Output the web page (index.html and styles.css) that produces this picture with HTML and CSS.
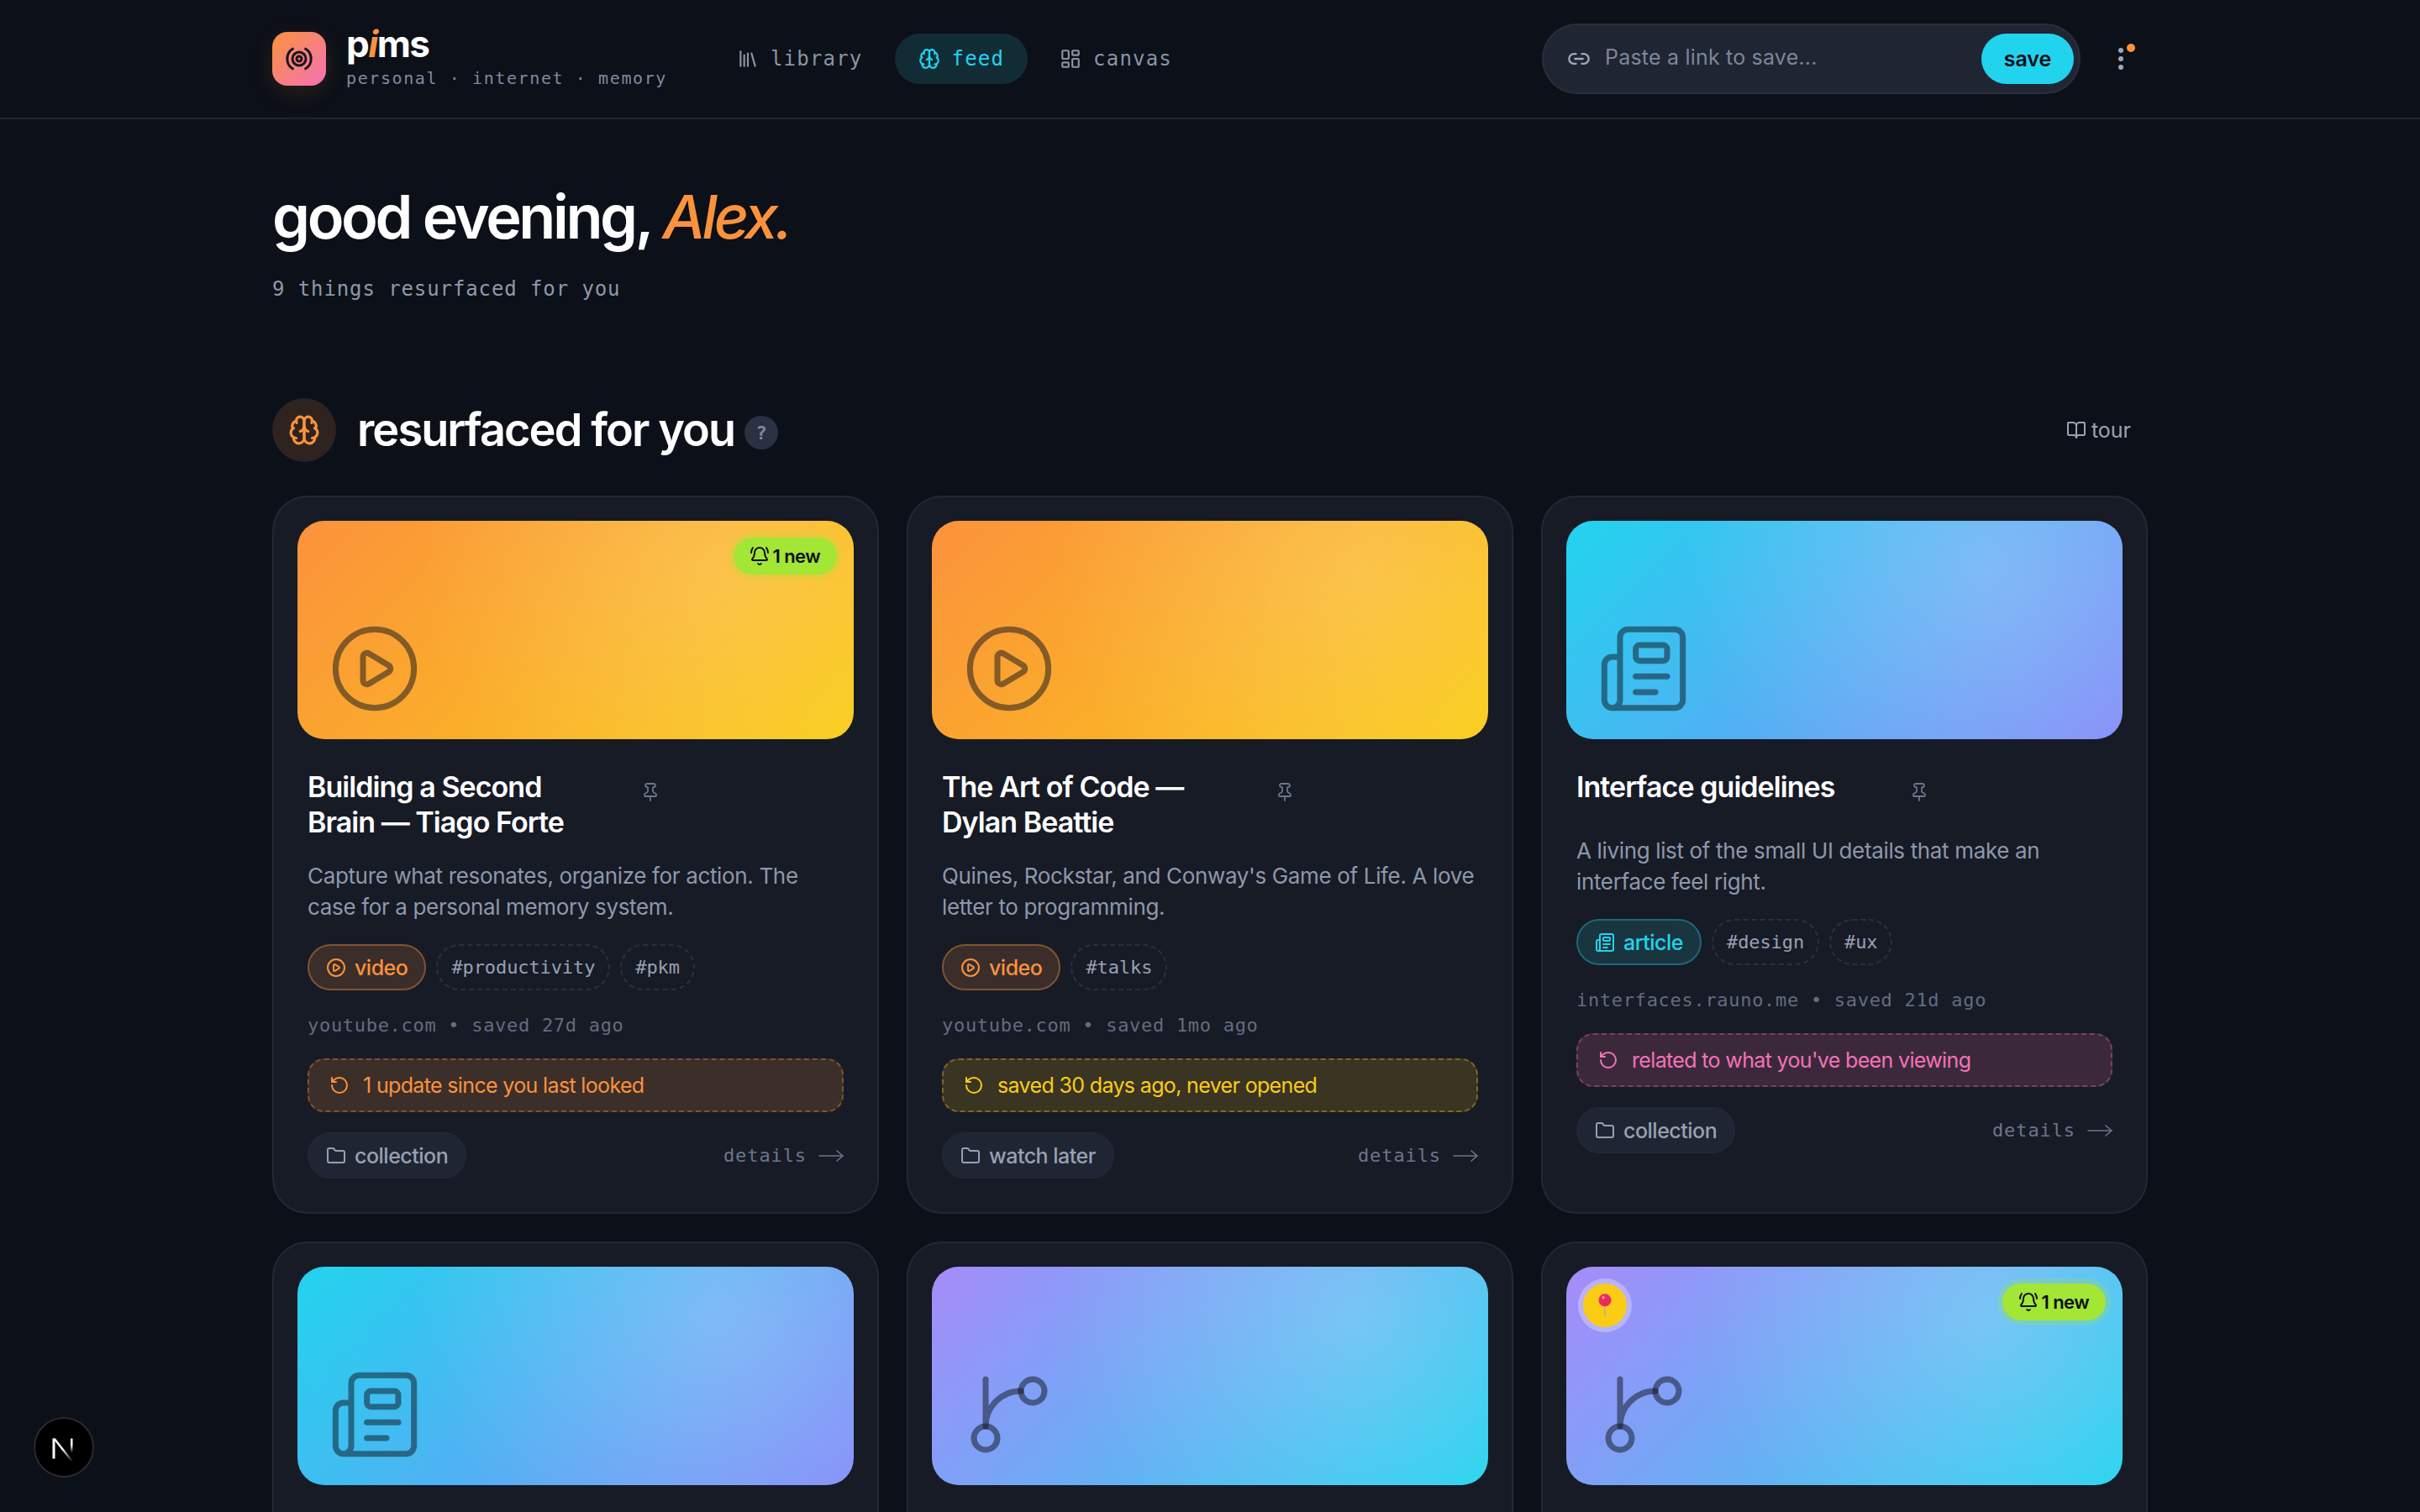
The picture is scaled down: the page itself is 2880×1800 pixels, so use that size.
FILE: index.html
```html
<!DOCTYPE html>
<html lang="en">
<head>
<meta charset="utf-8">
<title>pims</title>
<link rel="stylesheet" href="styles.css">
</head>
<body>
<svg class="defs" aria-hidden="true">
  <symbol id="i-library" viewBox="0 0 24 24"><path d="m16 6 4 14"/><path d="M12 6v14"/><path d="M8 8v12"/><path d="M4 4v16"/></symbol>
  <symbol id="i-brain" viewBox="0 0 24 24"><path d="M12 5a3 3 0 1 0-5.997.125 4 4 0 0 0-2.526 5.77 4 4 0 0 0 .556 6.588A4 4 0 1 0 12 18Z"/><path d="M12 5a3 3 0 1 1 5.997.125 4 4 0 0 1 2.526 5.77 4 4 0 0 1-.556 6.588A4 4 0 1 1 12 18Z"/><path d="M15 13a4.5 4.5 0 0 1-3-4 4.5 4.5 0 0 1-3 4"/><path d="M17.599 6.5a3 3 0 0 0 .399-1.375"/><path d="M6.003 5.125A3 3 0 0 0 6.401 6.5"/><path d="M3.477 10.896a4 4 0 0 1 .585-.396"/><path d="M19.938 10.5a4 4 0 0 1 .585.396"/><path d="M6 18a4 4 0 0 1-1.967-.516"/><path d="M19.967 17.484A4 4 0 0 1 18 18"/></symbol>
  <symbol id="i-canvas" viewBox="0 0 24 24"><rect width="7" height="9" x="3" y="3" rx="1"/><rect width="7" height="5" x="14" y="3" rx="1"/><rect width="7" height="9" x="14" y="12" rx="1"/><rect width="7" height="5" x="3" y="16" rx="1"/></symbol>
  <symbol id="i-link" viewBox="0 0 24 24"><path d="M9 17H7A5 5 0 0 1 7 7h2"/><path d="M15 7h2a5 5 0 1 1 0 10h-2"/><line x1="8" x2="16" y1="12" y2="12"/></symbol>
  <symbol id="i-book" viewBox="0 0 24 24"><path d="M12 7v14"/><path d="M3 18a1 1 0 0 1-1-1V4a1 1 0 0 1 1-1h5a4 4 0 0 1 4 4 4 4 0 0 1 4-4h5a1 1 0 0 1 1 1v13a1 1 0 0 1-1 1h-6a3 3 0 0 0-3 3 3 3 0 0 0-3-3z"/></symbol>
  <symbol id="i-play" viewBox="0 0 24 24"><path d="M9 9.003a1 1 0 0 1 1.517-.859l4.997 2.997a1 1 0 0 1 0 1.718l-4.997 2.997A1 1 0 0 1 9 14.996z"/><circle cx="12" cy="12" r="10"/></symbol>
  <symbol id="i-news" viewBox="0 0 24 24"><path d="M15 18h-5"/><path d="M18 14h-8"/><path d="M4 22h16a2 2 0 0 0 2-2V4a2 2 0 0 0-2-2H8a2 2 0 0 0-2 2v16a2 2 0 0 1-4 0v-9a2 2 0 0 1 2-2h2"/><rect width="8" height="4" x="10" y="6" rx="1"/></symbol>
  <symbol id="i-branch" viewBox="0 0 24 24"><path d="M15 6a9 9 0 0 0-9 9V3"/><circle cx="18" cy="6" r="3"/><circle cx="6" cy="18" r="3"/></symbol>
  <symbol id="i-bell" viewBox="0 0 24 24"><path d="M10.268 21a2 2 0 0 0 3.464 0"/><path d="M22 8c0-2.3-.8-4.3-2-6"/><path d="M3.262 15.326A1 1 0 0 0 4 17h16a1 1 0 0 0 .74-1.673C19.41 13.956 18 12.499 18 8A6 6 0 0 0 6 8c0 4.499-1.411 5.956-2.738 7.326"/><path d="M4 2C2.8 3.7 2 5.7 2 8"/></symbol>
  <symbol id="i-pin" viewBox="0 0 24 24"><path d="M12 17v5"/><path d="M9 10.76a2 2 0 0 1-1.11 1.79l-1.78.9A2 2 0 0 0 5 15.24V16a1 1 0 0 0 1 1h12a1 1 0 0 0 1-1v-.76a2 2 0 0 0-1.11-1.79l-1.78-.9A2 2 0 0 1 15 10.76V7a1 1 0 0 1 1-1 2 2 0 0 0 0-4H8a2 2 0 0 0 0 4 1 1 0 0 1 1 1z"/></symbol>
  <symbol id="i-rotate" viewBox="0 0 24 24"><path d="M3 12a9 9 0 1 0 9-9 9.75 9.75 0 0 0-6.74 2.74L3 8"/><path d="M3 3v5h5"/></symbol>
  <symbol id="i-folder" viewBox="0 0 24 24"><path d="M20 20a2 2 0 0 0 2-2V8a2 2 0 0 0-2-2h-7.9a2 2 0 0 1-1.69-.9L9.6 3.9A2 2 0 0 0 7.93 3H4a2 2 0 0 0-2 2v13a2 2 0 0 0 2 2Z"/></symbol>
  <symbol id="i-arrow" viewBox="0 0 30 24"><path d="M1 12h28"/><path d="m22 6 7 6-7 6"/></symbol>
</svg>

<header class="topbar">
  <div class="wrap topbar-row">
    <a class="brand">
      <span class="logo">
        <svg viewBox="0 0 32 32" class="logo-mark"><path d="M9.500 3.500a14 14 0 0 0 0 25"/><path d="M22.500 3.500a14 14 0 0 1 0 25"/><circle cx="16" cy="16" r="8"/><circle cx="16" cy="16" r="3"/></svg>
      </span>
      <span class="brand-text">
        <span class="brand-name">p<i>i</i>ms</span>
        <span class="brand-sub">personal · internet · memory</span>
      </span>
    </a>
    <nav class="nav">
      <a class="nav-link"><svg class="ic ic-nav"><use href="#i-library"/></svg>library</a>
      <a class="nav-link is-active"><svg class="ic ic-nav"><use href="#i-brain"/></svg>feed</a>
      <a class="nav-link"><svg class="ic ic-nav"><use href="#i-canvas"/></svg>canvas</a>
    </nav>
    <div class="actions">
      <form class="savebar">
        <svg class="ic ic-link"><use href="#i-link"/></svg>
        <span class="placeholder">Paste a link to save...</span>
        <span class="save-btn">save</span>
      </form>
      <button class="kebab" type="button"><span></span><span></span><span></span><b></b></button>
    </div>
  </div>
</header>

<main class="wrap">
  <section class="hero">
    <h1>good evening, <em>Alex.</em></h1>
    <p>9 things resurfaced for you</p>
  </section>

  <section class="sec-head">
    <span class="sec-icon"><svg class="ic ic-sec"><use href="#i-brain"/></svg></span>
    <h2>resurfaced for you</h2>
    <span class="help">?</span>
    <a class="tour"><svg class="ic ic-tour"><use href="#i-book"/></svg>tour</a>
  </section>

  <section class="grid">
    <article class="card">
      <div class="thumb t-video">
        <span class="badge-new"><svg class="ic ic-bell"><use href="#i-bell"/></svg>1 new</span>
        <svg class="ic thumb-ic"><use href="#i-play"/></svg>
      </div>
      <div class="body">
        <div class="title-row"><h3>Building a Second Brain — Tiago Forte</h3><span class="pin"><svg class="ic ic-pin"><use href="#i-pin"/></svg></span></div>
        <p class="desc">Capture what resonates, organize for action. The case for a personal memory system.</p>
        <div class="tags">
          <span class="kind k-video"><svg class="ic ic-tag"><use href="#i-play"/></svg>video</span>
          <span class="tag">#productivity</span>
          <span class="tag">#pkm</span>
        </div>
        <p class="meta">youtube.com • saved 27d ago</p>
        <div class="nudge n-orange"><svg class="ic ic-nudge"><use href="#i-rotate"/></svg>1 update since you last looked</div>
        <div class="foot">
          <span class="coll"><svg class="ic ic-tag"><use href="#i-folder"/></svg>collection</span>
          <a class="details">details<svg class="ic ic-arrow"><use href="#i-arrow"/></svg></a>
        </div>
      </div>
    </article>

    <article class="card">
      <div class="thumb t-video">
        <svg class="ic thumb-ic"><use href="#i-play"/></svg>
      </div>
      <div class="body">
        <div class="title-row"><h3>The Art of Code — Dylan Beattie</h3><span class="pin"><svg class="ic ic-pin"><use href="#i-pin"/></svg></span></div>
        <p class="desc">Quines, Rockstar, and Conway's Game of Life. A love letter to programming.</p>
        <div class="tags">
          <span class="kind k-video"><svg class="ic ic-tag"><use href="#i-play"/></svg>video</span>
          <span class="tag">#talks</span>
        </div>
        <p class="meta">youtube.com • saved 1mo ago</p>
        <div class="nudge n-yellow"><svg class="ic ic-nudge"><use href="#i-rotate"/></svg>saved 30 days ago, never opened</div>
        <div class="foot">
          <span class="coll"><svg class="ic ic-tag"><use href="#i-folder"/></svg>watch later</span>
          <a class="details">details<svg class="ic ic-arrow"><use href="#i-arrow"/></svg></a>
        </div>
      </div>
    </article>

    <article class="card">
      <div class="thumb t-article">
        <svg class="ic thumb-ic"><use href="#i-news"/></svg>
      </div>
      <div class="body">
        <div class="title-row"><h3>Interface guidelines</h3><span class="pin"><svg class="ic ic-pin"><use href="#i-pin"/></svg></span></div>
        <p class="desc">A living list of the small UI details that make an interface feel right.</p>
        <div class="tags">
          <span class="kind k-article"><svg class="ic ic-tag"><use href="#i-news"/></svg>article</span>
          <span class="tag">#design</span>
          <span class="tag">#ux</span>
        </div>
        <p class="meta">interfaces.rauno.me • saved 21d ago</p>
        <div class="nudge n-pink"><svg class="ic ic-nudge"><use href="#i-rotate"/></svg>related to what you've been viewing</div>
        <div class="foot">
          <span class="coll"><svg class="ic ic-tag"><use href="#i-folder"/></svg>collection</span>
          <a class="details">details<svg class="ic ic-arrow"><use href="#i-arrow"/></svg></a>
        </div>
      </div>
    </article>

    <article class="card card-cut">
      <div class="thumb t-article">
        <svg class="ic thumb-ic"><use href="#i-news"/></svg>
      </div>
    </article>

    <article class="card card-cut">
      <div class="thumb t-repo">
        <svg class="ic thumb-ic"><use href="#i-branch"/></svg>
      </div>
    </article>

    <article class="card card-cut">
      <div class="thumb t-repo">
        <span class="badge-pin">
          <svg viewBox="0 0 24 24" class="pushpin">
            <rect x="11.500" y="11" width="1" height="11.500" rx=".5" class="pp-needle"/>
            <circle cx="12" cy="7" r="6" class="pp-head"/>
            <ellipse cx="10.500" cy="4.500" rx="1.300" ry="1.600" class="pp-shine"/>
          </svg>
        </span>
        <span class="badge-new"><svg class="ic ic-bell"><use href="#i-bell"/></svg>1 new</span>
        <svg class="ic thumb-ic"><use href="#i-branch"/></svg>
      </div>
    </article>
  </section>
</main>

<button class="next-badge" type="button">
  <svg viewBox="0 0 40 40" class="next-mark">
    <defs><linearGradient id="nfade" x1="0" y1="0" x2="0" y2="1"><stop offset=".45" stop-color="#fff"/><stop offset="1" stop-color="#fff" stop-opacity="0"/></linearGradient></defs>
    <rect x="6.500" y="9.500" width="3" height="24" class="nm-solid"/>
    <path d="M7 9.500h3L31.500 37h-3z" fill="url(#nfade)"/>
    <rect x="28" y="9.500" width="2.500" height="17" fill="url(#nfade)"/>
  </svg>
</button>
</body>
</html>
```

FILE: styles.css
```css
* { box-sizing: border-box; }
html { background: #0c1018; scrollbar-width: none; }
body {
  margin: 0;
  background: #0c1018;
  color: #fff;
  font-family: Inter, "Liberation Sans", sans-serif;
}
h1, h2, h3, p { margin: 0; }
.defs { position: absolute; width: 0; height: 0; overflow: hidden; }
.wrap { width: 2232px; margin: 0 auto; }
.ic {
  display: block;
  flex: none;
  fill: none;
  stroke: currentColor;
  stroke-width: 2;
  stroke-linecap: round;
  stroke-linejoin: round;
}

/* top bar */
.topbar { height: 142px; border-bottom: 2px solid #1e2430; }
.topbar-row { height: 140px; display: flex; align-items: center; }
.brand { display: flex; align-items: center; gap: 24px; }
.logo {
  width: 64px; height: 64px;
  border-radius: 18px;
  display: flex; align-items: center; justify-content: center;
  background: linear-gradient(135deg, #fb923c, #f472b6);
  box-shadow: 0 8px 28px rgba(251, 146, 60, .12);
}
.logo-mark { width: 32px; height: 32px; fill: none; stroke: #1a1220; stroke-width: 3; }
.brand-text { display: flex; flex-direction: column; }
.brand-name { font-size: 44px; line-height: 46px; font-weight: 700; letter-spacing: -1.5px; margin-top: -6px; }
.brand-name i { color: #fb923c; font-weight: 700; }
.brand-sub {
  font-family: "DejaVu Sans Mono", monospace;
  font-size: 20px; line-height: 24px;
  letter-spacing: 1.6px;
  color: #8089a0;
  margin-top: 6px;
}
.nav { display: flex; gap: 10px; margin-left: 55px; }
.nav-link {
  height: 60px;
  padding: 0 28px;
  border-radius: 30px;
  display: flex; align-items: center; gap: 14px;
  font-family: "DejaVu Sans Mono", monospace;
  font-size: 24px;
  letter-spacing: 1.2px;
  color: #8a93a6;
}
.nav-link.is-active { background: #122c36; color: #22d3ee; }
.ic-nav { width: 26px; height: 26px; }
.actions { margin-left: auto; margin-right: 12px; display: flex; align-items: center; gap: 28px; }
.savebar {
  width: 641px; height: 84px;
  margin: 0;
  padding: 0 6px 0 28px;
  border-radius: 42px;
  border: 2px solid #282e3c;
  background: #1f2532;
  display: flex; align-items: center;
}
.ic-link { width: 28px; height: 28px; color: #a0a8b8; }
.placeholder { margin-left: 17px; font-size: 25px; letter-spacing: .2px; color: #7d8698; position: relative; top: -2px; }
.save-btn {
  margin-left: auto;
  width: 110px; height: 60px;
  border-radius: 30px;
  background: #22d3ee;
  color: #0c1018;
  font-size: 25px; font-weight: 600;
  display: flex; align-items: center; justify-content: center;
}
.kebab {
  position: relative;
  width: 40px; height: 40px;
  padding: 0;
  border: 0; background: none;
  display: flex; flex-direction: column; align-items: center; justify-content: center; gap: 4px;
}
.kebab span { width: 6px; height: 6px; border-radius: 50%; background: #a0a8b8; }
.kebab b {
  position: absolute; top: 2px; right: 3px;
  width: 10px; height: 10px; border-radius: 50%;
  background: #fb923c;
}

/* hero */
.hero { padding-top: 74px; }
.hero h1 {
  font-size: 72px; line-height: 84px;
  font-weight: 600;
  letter-spacing: -3.4px;
}
.hero em { color: #fb923c; font-weight: 500; letter-spacing: -4px; }
.hero p {
  margin-top: 28px;
  font-family: "DejaVu Sans Mono", monospace;
  font-size: 24px; line-height: 32px;
  letter-spacing: .9px;
  color: #8f98aa;
}

/* section head */
.sec-head { margin-top: 114px; display: flex; align-items: center; height: 76px; }
.sec-icon {
  width: 76px; height: 76px; border-radius: 50%;
  background: #2f231f; color: #fb923c;
  display: flex; align-items: center; justify-content: center;
}
.ic-sec { width: 38px; height: 38px; }
.sec-head h2 {
  margin-left: 25px;
  font-size: 54px; line-height: 64px;
  font-weight: 600;
  letter-spacing: -1.9px;
}
.help {
  margin-left: 12px;
  width: 40px; height: 40px; border-radius: 50%;
  background: #2a3142; color: #8089a0;
  font-family: "DejaVu Sans Mono", monospace;
  font-size: 22px; font-weight: 700;
  display: flex; align-items: center; justify-content: center;
  position: relative; top: 3px;
}
.tour {
  margin-left: auto; margin-right: 20px;
  display: flex; align-items: center; gap: 6px;
  font-size: 25px; color: #9aa3b2;
}
.ic-tour { width: 24px; height: 24px; }

/* grid */
.grid {
  margin-top: 40px;
  display: grid;
  grid-template-columns: repeat(3, 1fr);
  gap: 33px 33px;
}
.card {
  min-width: 0;
  padding: 28px 28px 40px;
  border-radius: 42px;
  border: 2px solid #222836;
  background: #171b26;
}
.card-cut { height: 420px; }
.thumb {
  position: relative;
  height: 260px;
  border-radius: 32px;
}
.t-video {
  background:
    radial-gradient(circle 360px at 76% 22%, rgba(255, 255, 255, .18), rgba(255, 255, 255, 0) 100%),
    linear-gradient(135deg, #fb923c, #facc15);
}
.t-article {
  background:
    radial-gradient(circle 360px at 76% 22%, rgba(255, 255, 255, .22), rgba(255, 255, 255, 0) 100%),
    linear-gradient(135deg, #22d3ee, #818cf8);
}
.t-repo {
  background:
    radial-gradient(circle 360px at 76% 22%, rgba(255, 255, 255, .2), rgba(255, 255, 255, 0) 100%),
    linear-gradient(135deg, #a78bfa, #22d3ee);
}
.thumb-ic {
  position: absolute; left: 36px; bottom: 28px;
  width: 112px; height: 112px;
  color: rgba(13, 17, 28, .5);
  stroke-width: 1.5;
}
.badge-new {
  position: absolute; top: 20px; right: 20px;
  height: 44px; padding: 0 20px 0 19px;
  border-radius: 22px;
  background: #a3e635;
  box-shadow: 0 0 0 6px rgba(163, 230, 53, .22);
  color: #0c1018;
  font-size: 22px; font-weight: 600; letter-spacing: -.6px;
  display: flex; align-items: center; gap: 4px;
}
.ic-bell { width: 24px; height: 24px; }
.badge-pin {
  position: absolute; top: 20px; left: 20px;
  width: 52px; height: 52px; border-radius: 50%;
  background: #facc15;
  box-shadow: 0 0 0 6px rgba(255, 255, 255, .3);
  display: flex; align-items: center; justify-content: center;
}
.pushpin { width: 30px; height: 30px; }
.pp-needle { fill: #a9a9a9; }
.pp-head { fill: #ec2a62; }
.pp-shine { fill: #ff8fa8; }

.body { padding: 36px 12px 0; }
.title-row { display: flex; align-items: flex-start; min-height: 54px; }
.title-row h3 {
  width: 340px;
  font-size: 34px; line-height: 42px;
  font-weight: 600;
  letter-spacing: -.95px;
}
.pin { margin-left: 56px; padding-top: 15px; width: 24px; color: #6d768a; }
.ic-pin { width: 24px; height: 24px; stroke-width: 1.8; }
.desc {
  margin-top: 24px;
  font-size: 26px; line-height: 37px;
  letter-spacing: -.35px;
  color: #8e98ab;
}
.tags { margin-top: 26px; display: flex; gap: 12px; }
.kind {
  height: 55px; padding: 0 20px;
  border-radius: 28px;
  display: flex; align-items: center; gap: 10px;
  font-size: 25px; font-weight: 500; letter-spacing: -.5px;
  border: 2px solid;
}
.k-video { background: #3a2d2a; border-color: #7f5430; color: #fb923c; }
.k-article { background: #19353f; border-color: #1c6878; color: #22d3ee; }
.ic-tag { width: 24px; height: 24px; }
.tag {
  height: 55px; padding: 0 16px;
  border-radius: 28px;
  border: 2px dashed #2a3040;
  display: flex; align-items: center;
  font-family: "DejaVu Sans Mono", monospace;
  font-size: 22px; font-weight: 500;
  letter-spacing: -.1px;
  color: #98a1b3;
}
.meta {
  margin-top: 27px;
  font-family: "DejaVu Sans Mono", monospace;
  font-size: 22px; line-height: 30px;
  letter-spacing: .7px;
  color: #636c80;
}
.nudge {
  margin-top: 24px;
  height: 64px; padding: 0 24px;
  border-radius: 20px;
  border: 2px dashed;
  display: flex; align-items: center; gap: 16px;
  font-size: 25px; letter-spacing: -.65px;
}
.n-orange { background: #3c2e29; border-color: #7f5430; color: #fb923c; }
.n-yellow { background: #3a3423; border-color: #7e6a1c; color: #facc15; }
.n-pink { background: #3b293b; border-color: #7c3f67; color: #f472b6; }
.ic-nudge { width: 24px; height: 24px; }
.foot { margin-top: 24px; display: flex; align-items: center; justify-content: space-between; }
.coll {
  height: 55px; padding: 0 20px;
  border-radius: 28px;
  border: 2px solid #222836;
  background: #1f2532;
  color: #98a1b3;
  display: flex; align-items: center; gap: 10px;
  font-size: 25px; font-weight: 500; letter-spacing: -.5px;
}
.details {
  display: flex; align-items: center; gap: 14px;
  font-family: "DejaVu Sans Mono", monospace;
  font-size: 22px;
  letter-spacing: .9px;
  color: #6d768a;
}
.ic-arrow { width: 30px; height: 24px; stroke-width: 1.6; }

/* framework badge */
.next-badge {
  position: fixed; left: 40px; bottom: 41px;
  width: 72px; height: 72px;
  padding: 0;
  border-radius: 50%;
  border: 2px solid #2a2a2a;
  background: #000;
  display: flex; align-items: center; justify-content: center;
}
.next-mark { width: 40px; height: 40px; }
.nm-solid { fill: #fff; }
```
